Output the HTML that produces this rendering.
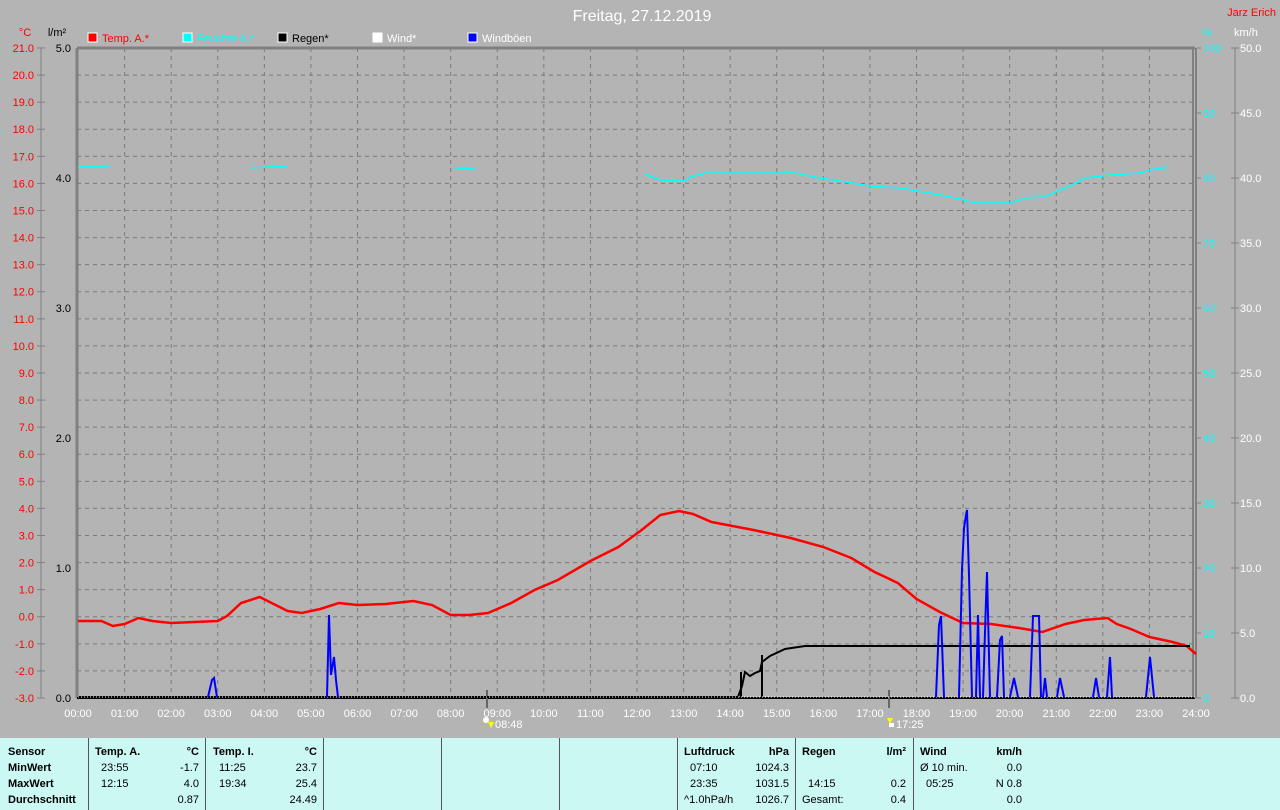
<!DOCTYPE html>
<html><head><meta charset="utf-8"><style>
body{margin:0;width:1280px;height:810px;background:#b4b4b4;font-family:"Liberation Sans",sans-serif;overflow:hidden;position:relative}
svg{position:absolute;left:0;top:0}
#tbl{position:absolute;left:0;top:738px;width:1280px;height:72px;background:#ccf8f4;font-size:11px;color:#000}
.c{position:absolute;top:0;height:72px;border-left:1px solid #555}
.t{position:absolute;white-space:nowrap}
.b{font-weight:bold}
</style></head><body>
<svg id="s" width="1280" height="738" font-family="Liberation Sans, sans-serif" font-size="11"></svg>
<div id="tbl"></div>
<script>
const s=document.getElementById('s');let h='';
const X=t=>78+t*46.583, L=77,R=1195,T=48,B=698;
for(let i=1;i<24;i++){h+=`<line x1="${X(i)}" y1="${T}" x2="${X(i)}" y2="${B}" stroke="#7a7a7a" stroke-dasharray="4,4"/>`;}
for(let i=1;i<24;i++){let y=T+i*27.083;h+=`<line x1="${L}" y1="${y}" x2="${R}" y2="${y}" stroke="#7a7a7a" stroke-dasharray="4,4"/>`;}
h+=`<line x1="${L}" y1="${T}" x2="${R}" y2="${T}" stroke="#808080" stroke-width="3"/>`;
h+=`<line x1="${L}" y1="${T}" x2="${L}" y2="${B}" stroke="#808080" stroke-width="3"/>`;
h+=`<line x1="${R-2}" y1="${T}" x2="${R-2}" y2="${B}" stroke="#808080" stroke-width="2"/><line x1="${R+1}" y1="${T}" x2="${R+1}" y2="${B}" stroke="#808080" stroke-width="2"/>`;
h+=`<line x1="${L}" y1="${B}" x2="${R}" y2="${B}" stroke="#000" stroke-width="2"/>`;
h+=`<line x1="41" y1="${T}" x2="41" y2="${B}" stroke="#808080"/>`;
for(let i=0;i<=24;i++){let y=T+i*27.083,v=(21-i).toFixed(1);h+=`<line x1="37" y1="${y}" x2="45" y2="${y}" stroke="#808080"/><text x="34" y="${y+4}" fill="#f00" text-anchor="end">${v}</text>`;}
h+=`<text x="25" y="36" fill="#f00" text-anchor="middle">°C</text><text x="57" y="36" fill="#000" text-anchor="middle">l/m²</text>`;
for(let i=0;i<=5;i++){let y=T+i*130;h+=`<text x="71" y="${y+4}" fill="#000" text-anchor="end">${(5-i).toFixed(1)}</text>`;}
h+=`<line x1="1235" y1="${T}" x2="1235" y2="${B}" stroke="#808080"/>`;
for(let i=0;i<=10;i++){let y=T+i*65;h+=`<line x1="1197" y1="${y}" x2="1201" y2="${y}" stroke="#808080"/><text x="1203" y="${y+4}" fill="#0ff">${100-i*10}</text><line x1="1231" y1="${y}" x2="1239" y2="${y}" stroke="#808080"/><text x="1240" y="${y+4}" fill="#fff">${(50-i*5).toFixed(1)}</text>`;}
h+=`<text x="1202" y="36" fill="#0ff">%</text><text x="1234" y="36" fill="#fff">km/h</text><text x="1276" y="16" fill="#f00" text-anchor="end">Jarz Erich</text>`;
h+=`<text x="642" y="21" fill="#fff" font-size="16" text-anchor="middle">Freitag, 27.12.2019</text>`;
[[88,'#f00','Temp. A.*'],[183,'#0ff','Feuchte A.*'],[278,'#000','Regen*'],[373,'#fff','Wind*'],[468,'#00f','Windböen']].forEach(l=>{h+=`<rect x="${l[0]}" y="33" width="9" height="9" fill="${l[1]}" stroke="#fff"/><text x="${l[0]+14}" y="42" fill="${l[1]==='#00f'?'#fff':l[1]}">${l[2]}</text>`;});
for(let i=0;i<=24;i++){h+=`<text x="${X(i)}" y="717" fill="#fff" text-anchor="middle">${String(i).padStart(2,'0')}:00</text>`;}
h+=`<line x1="487" y1="690" x2="487" y2="708" stroke="#666" stroke-width="2"/><line x1="889" y1="690" x2="889" y2="708" stroke="#666" stroke-width="2"/>`;
h+=`<circle cx="486" cy="720" r="3" fill="#fff"/><path d="M488 722l3 6 3-6z" fill="#ff0"/><text x="495" y="728" fill="#fff">08:48</text>`;
h+=`<path d="M887 718l3 6 3-6z" fill="#ff0"/><rect x="889" y="723" width="5" height="4" fill="#fff"/><text x="896" y="728" fill="#fff">17:25</text>`;
const hum=[[[78,167],[110,166]],[[250,168],[287,166]],[[455,168],[475,169]],[[645,174],[660,180],[685,181],[690,177],[705,173],[795,173],[820,178],[840,181],[870,186],[900,188],[930,193],[960,199],[975,203],[1010,203],[1025,198],[1045,197],[1060,190],[1070,186],[1085,178],[1110,175],[1140,173],[1150,170],[1168,167]]];
hum.forEach(p=>h+=`<polyline points="${p.map(a=>a.join(',')).join(' ')}" fill="none" stroke="#0ff" stroke-width="1.5"/>`);
const tp=[[0,621],[0.5,621],[0.75,626],[1,624],[1.3,618],[1.6,621],[2,623],[2.5,622],[3,621],[3.2,616],[3.5,603],[3.9,597],[4.2,604],[4.5,611],[4.8,613],[5.2,609],[5.6,603],[6,605],[6.6,604],[7.2,601],[7.6,605],[8,615],[8.4,615],[8.8,613],[9.3,603],[9.8,590],[10.3,580],[11,561],[11.6,547],[12.1,530],[12.5,515],[12.9,511],[13.2,514],[13.6,522],[14.5,530],[15.3,538],[16,547],[16.6,558],[17.1,572],[17.6,583],[18,599],[18.5,612],[19,623],[19.6,624],[20.2,628],[20.7,632],[21.2,624],[21.6,620],[22.1,618],[22.3,624],[22.6,629],[23,637],[23.5,642],[23.8,646],[24,654]];
h+=`<polyline points="${tp.map(a=>X(a[0])+','+a[1]).join(' ')}" fill="none" stroke="#f00" stroke-width="2.5"/>`;
h+=`<polyline points="78,697 738,697 742,686 745,672 750,676 755,673 760,671 762,662 770,656 785,649 805,646 1190,646" fill="none" stroke="#000" stroke-width="2"/>`;
h+=`<line x1="741" y1="672" x2="741" y2="698" stroke="#000" stroke-width="2"/><line x1="762" y1="655" x2="762" y2="698" stroke="#000" stroke-width="2"/>`;
h+=`<line x1="78" y1="697" x2="1195" y2="697" stroke="#fff" stroke-dasharray="1,2"/>`;
const g=[[[208,697],[212,680],[214,678],[217,697]],[[327,697],[329,615],[331,675],[334,657],[336,680],[338,697]],[[936,697],[939,625],[941,616],[944,697]],[[959,697],[962,570],[964,528],[966,515],[967,510],[969,575],[972,697]],[[976,697],[978,615],[980,697]],[[983,697],[986,600],[987,572],[990,697]],[[997,697],[1000,640],[1002,636],[1004,697]],[[1010,697],[1014,678],[1018,697]],[[1030,697],[1033,616],[1039,616],[1041,697]],[[1043,697],[1045,678],[1047,697]],[[1057,697],[1060,678],[1064,697]],[[1093,697],[1096,678],[1099,697]],[[1107,697],[1110,657],[1112,697]],[[1146,697],[1150,657],[1154,697]]];
g.forEach(p=>h+=`<polyline points="${p.map(a=>a.join(',')).join(' ')}" fill="none" stroke="#00f" stroke-width="2"/>`);
s.innerHTML=h;
const tb=document.getElementById('tbl');let q='';
[88,205,323,441,559,677,795,913].forEach(x=>q+=`<div class="c" style="left:${x}px"></div>`);
const rows=[16,32,48,64];
const put=(x,r,t,b,a)=>{q+=`<div class="t${b?' b':''}" style="${a?'right:'+(1280-x)+'px':'left:'+x+'px'};top:${rows[r]-8}px">${t}</div>`;};
['Sensor','MinWert','MaxWert','Durchschnitt'].forEach((t,i)=>put(8,i,t,1));
put(95,0,'Temp. A.',1);put(199,0,'°C',1,1);put(101,1,'23:55');put(199,1,'-1.7',0,1);put(101,2,'12:15');put(199,2,'4.0',0,1);put(199,3,'0.87',0,1);
put(213,0,'Temp. I.',1);put(317,0,'°C',1,1);put(219,1,'11:25');put(317,1,'23.7',0,1);put(219,2,'19:34');put(317,2,'25.4',0,1);put(317,3,'24.49',0,1);
put(684,0,'Luftdruck',1);put(789,0,'hPa',1,1);put(690,1,'07:10');put(789,1,'1024.3',0,1);put(690,2,'23:35');put(789,2,'1031.5',0,1);put(684,3,'^1.0hPa/h');put(789,3,'1026.7',0,1);
put(802,0,'Regen',1);put(906,0,'l/m²',1,1);put(808,2,'14:15');put(906,2,'0.2',0,1);put(802,3,'Gesamt:');put(906,3,'0.4',0,1);
put(920,0,'Wind',1);put(1022,0,'km/h',1,1);put(920,1,'Ø 10 min.');put(1022,1,'0.0',0,1);put(926,2,'05:25');put(1022,2,'N 0.8',0,1);put(1022,3,'0.0',0,1);
tb.innerHTML=q;
</script>
</body></html>
